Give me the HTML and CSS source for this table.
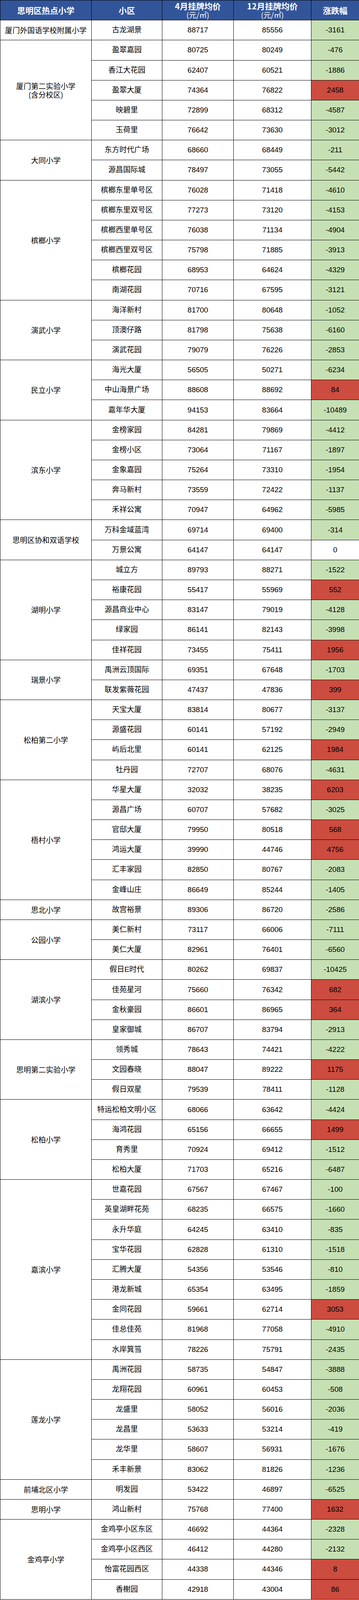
FILE: index.html
```html
<!DOCTYPE html>
<html lang="zh-CN">
<head>
<meta charset="utf-8">
<title>思明区热点小学挂牌均价</title>
<link rel="stylesheet" href="styles.css">
</head>
<body>
<table class="price-table">
  <colgroup>
    <col class="c-school">
    <col class="c-estate">
    <col class="c-apr">
    <col class="c-dec">
    <col class="c-diff">
  </colgroup>
  <thead>
    <tr>
      <th>思明区热点小学</th>
      <th>小区</th>
      <th>4月挂牌均价<br><span class="unit">(元/㎡)</span></th>
      <th>12月挂牌均价<br><span class="unit">(元/㎡)</span></th>
      <th>涨跌幅</th>
    </tr>
  </thead>
  <tbody>
    <tr><td class="school">厦门外国语学校附属小学</td><td>古龙湖景</td><td>88717</td><td>85556</td><td class="down">-3161</td></tr>

    <tr><td class="school" rowspan="5">厦门第二实验小学<br>(含分校区)</td><td>盈翠嘉园</td><td>80725</td><td>80249</td><td class="down">-476</td></tr>
    <tr><td>香江大花园</td><td>62407</td><td>60521</td><td class="down">-1886</td></tr>
    <tr><td>盈翠大厦</td><td>74364</td><td>76822</td><td class="up">2458</td></tr>
    <tr><td>映碧里</td><td>72899</td><td>68312</td><td class="down">-4587</td></tr>
    <tr><td>玉荷里</td><td>76642</td><td>73630</td><td class="down">-3012</td></tr>

    <tr><td class="school" rowspan="2">大同小学</td><td>东方时代广场</td><td>68660</td><td>68449</td><td class="down">-211</td></tr>
    <tr><td>源昌国际城</td><td>78497</td><td>73055</td><td class="down">-5442</td></tr>

    <tr><td class="school" rowspan="6">槟榔小学</td><td>槟榔东里单号区</td><td>76028</td><td>71418</td><td class="down">-4610</td></tr>
    <tr><td>槟榔东里双号区</td><td>77273</td><td>73120</td><td class="down">-4153</td></tr>
    <tr><td>槟榔西里单号区</td><td>76038</td><td>71134</td><td class="down">-4904</td></tr>
    <tr><td>槟榔西里双号区</td><td>75798</td><td>71885</td><td class="down">-3913</td></tr>
    <tr><td>槟榔花园</td><td>68953</td><td>64624</td><td class="down">-4329</td></tr>
    <tr><td>南湖花园</td><td>70716</td><td>67595</td><td class="down">-3121</td></tr>

    <tr><td class="school" rowspan="3">演武小学</td><td>海洋新村</td><td>81700</td><td>80648</td><td class="down">-1052</td></tr>
    <tr><td>顶澳仔路</td><td>81798</td><td>75638</td><td class="down">-6160</td></tr>
    <tr><td>演武花园</td><td>79079</td><td>76226</td><td class="down">-2853</td></tr>

    <tr><td class="school" rowspan="3">民立小学</td><td>海光大厦</td><td>56505</td><td>50271</td><td class="down">-6234</td></tr>
    <tr><td>中山海景广场</td><td>88608</td><td>88692</td><td class="up">84</td></tr>
    <tr><td>嘉年华大厦</td><td>94153</td><td>83664</td><td class="down">-10489</td></tr>

    <tr><td class="school" rowspan="5">滨东小学</td><td>金榜家园</td><td>84281</td><td>79869</td><td class="down">-4412</td></tr>
    <tr><td>金榜小区</td><td>73064</td><td>71167</td><td class="down">-1897</td></tr>
    <tr><td>金象嘉园</td><td>75264</td><td>73310</td><td class="down">-1954</td></tr>
    <tr><td>奔马新村</td><td>73559</td><td>72422</td><td class="down">-1137</td></tr>
    <tr><td>禾祥公寓</td><td>70947</td><td>64962</td><td class="down">-5985</td></tr>

    <tr><td class="school" rowspan="2">思明区协和双语学校</td><td>万科金域蓝湾</td><td>69714</td><td>69400</td><td class="down">-314</td></tr>
    <tr><td>万景公寓</td><td>64147</td><td>64147</td><td class="zero">0</td></tr>

    <tr><td class="school" rowspan="5">湖明小学</td><td>城立方</td><td>89793</td><td>88271</td><td class="down">-1522</td></tr>
    <tr><td>裕康花园</td><td>55417</td><td>55969</td><td class="up">552</td></tr>
    <tr><td>源昌商业中心</td><td>83147</td><td>79019</td><td class="down">-4128</td></tr>
    <tr><td>绿家园</td><td>86141</td><td>82143</td><td class="down">-3998</td></tr>
    <tr><td>佳祥花园</td><td>73455</td><td>75411</td><td class="up">1956</td></tr>

    <tr><td class="school" rowspan="2">瑞景小学</td><td>禹洲云顶国际</td><td>69351</td><td>67648</td><td class="down">-1703</td></tr>
    <tr><td>联发紫薇花园</td><td>47437</td><td>47836</td><td class="up">399</td></tr>

    <tr><td class="school" rowspan="4">松柏第二小学</td><td>天宝大厦</td><td>83814</td><td>80677</td><td class="down">-3137</td></tr>
    <tr><td>源盛花园</td><td>60141</td><td>57192</td><td class="down">-2949</td></tr>
    <tr><td>屿后北里</td><td>60141</td><td>62125</td><td class="up">1984</td></tr>
    <tr><td>牡丹园</td><td>72707</td><td>68076</td><td class="down">-4631</td></tr>

    <tr><td class="school" rowspan="6">梧村小学</td><td>华星大厦</td><td>32032</td><td>38235</td><td class="up">6203</td></tr>
    <tr><td>源昌广场</td><td>60707</td><td>57682</td><td class="down">-3025</td></tr>
    <tr><td>官邸大厦</td><td>79950</td><td>80518</td><td class="up">568</td></tr>
    <tr><td>鸿运大厦</td><td>39990</td><td>44746</td><td class="up">4756</td></tr>
    <tr><td>汇丰家园</td><td>82850</td><td>80767</td><td class="down">-2083</td></tr>
    <tr><td>金峰山庄</td><td>86649</td><td>85244</td><td class="down">-1405</td></tr>

    <tr><td class="school">思北小学</td><td>故宫裕景</td><td>89306</td><td>86720</td><td class="down">-2586</td></tr>

    <tr><td class="school" rowspan="2">公园小学</td><td>美仁新村</td><td>73117</td><td>66006</td><td class="down">-7111</td></tr>
    <tr><td>美仁大厦</td><td>82961</td><td>76401</td><td class="down">-6560</td></tr>

    <tr><td class="school" rowspan="4">湖滨小学</td><td>假日E时代</td><td>80262</td><td>69837</td><td class="down">-10425</td></tr>
    <tr><td>佳苑星河</td><td>75660</td><td>76342</td><td class="up">682</td></tr>
    <tr><td>金秋豪园</td><td>86601</td><td>86965</td><td class="up">364</td></tr>
    <tr><td>皇家御城</td><td>86707</td><td>83794</td><td class="down">-2913</td></tr>

    <tr><td class="school" rowspan="3">思明第二实验小学</td><td>领秀城</td><td>78643</td><td>74421</td><td class="down">-4222</td></tr>
    <tr><td>文园春晓</td><td>88047</td><td>89222</td><td class="up">1175</td></tr>
    <tr><td>假日双星</td><td>79539</td><td>78411</td><td class="down">-1128</td></tr>

    <tr><td class="school" rowspan="4">松柏小学</td><td>特运松柏文明小区</td><td>68066</td><td>63642</td><td class="down">-4424</td></tr>
    <tr><td>海鸿花园</td><td>65156</td><td>66655</td><td class="up">1499</td></tr>
    <tr><td>育秀里</td><td>70924</td><td>69412</td><td class="down">-1512</td></tr>
    <tr><td>松柏大厦</td><td>71703</td><td>65216</td><td class="down">-6487</td></tr>

    <tr><td class="school" rowspan="9">嘉滨小学</td><td>世嘉花园</td><td>67567</td><td>67467</td><td class="down">-100</td></tr>
    <tr><td>英皇湖畔花苑</td><td>68235</td><td>66575</td><td class="down">-1660</td></tr>
    <tr><td>永升华庭</td><td>64245</td><td>63410</td><td class="down">-835</td></tr>
    <tr><td>宝华花园</td><td>62828</td><td>61310</td><td class="down">-1518</td></tr>
    <tr><td>汇腾大厦</td><td>54356</td><td>53546</td><td class="down">-810</td></tr>
    <tr><td>港龙新城</td><td>65354</td><td>63495</td><td class="down">-1859</td></tr>
    <tr><td>金同花园</td><td>59661</td><td>62714</td><td class="up">3053</td></tr>
    <tr><td>佳总佳苑</td><td>81968</td><td>77058</td><td class="down">-4910</td></tr>
    <tr><td>水岸箕筜</td><td>78226</td><td>75791</td><td class="down">-2435</td></tr>

    <tr><td class="school" rowspan="6">莲龙小学</td><td>禹洲花园</td><td>58735</td><td>54847</td><td class="down">-3888</td></tr>
    <tr><td>龙翔花园</td><td>60961</td><td>60453</td><td class="down">-508</td></tr>
    <tr><td>龙盛里</td><td>58052</td><td>56016</td><td class="down">-2036</td></tr>
    <tr><td>龙昌里</td><td>53633</td><td>53214</td><td class="down">-419</td></tr>
    <tr><td>龙华里</td><td>58607</td><td>56931</td><td class="down">-1676</td></tr>
    <tr><td>禾丰新景</td><td>83062</td><td>81826</td><td class="down">-1236</td></tr>

    <tr><td class="school">前埔北区小学</td><td>明发园</td><td>53422</td><td>46897</td><td class="down">-6525</td></tr>

    <tr><td class="school">思明小学</td><td>鸿山新村</td><td>75768</td><td>77400</td><td class="up">1632</td></tr>

    <tr><td class="school" rowspan="4">金鸡亭小学</td><td>金鸡亭小区东区</td><td>46692</td><td>44364</td><td class="down">-2328</td></tr>
    <tr><td>金鸡亭小区西区</td><td>46412</td><td>44280</td><td class="down">-2132</td></tr>
    <tr><td>怡富花园西区</td><td>44338</td><td>44346</td><td class="up">8</td></tr>
    <tr><td>香榭园</td><td>42918</td><td>43004</td><td class="up">86</td></tr>
  </tbody>
</table>
</body>
</html>
```

FILE: styles.css
```css
:root {
  --row-h: calc(100vh * 73 / 5842);
  --line-h: min(28px, max(22px, calc(100vh * 28 / 5842)));
  --head-line-h: min(27px, max(22px, calc(100vh * 27 / 5842)));
}

html, body {
  margin: 0;
  padding: 0;
  background: #ffffff;
}

.price-table {
  width: 920px;
  table-layout: fixed;
  border-collapse: collapse;
  font-family: "Liberation Sans", "Noto Sans CJK SC", sans-serif;
  font-size: 19px;
  color: #000000;
}

.c-school { width: 234px; }
.c-estate { width: 181px; }
.c-apr { width: 183px; }
.c-dec { width: 199px; }
.c-diff { width: 123px; }

.price-table tr {
  height: var(--row-h);
}

.price-table th,
.price-table td {
  border: 1px solid #000000;
  padding: 0 2px;
  text-align: center;
  vertical-align: middle;
  white-space: nowrap;
  line-height: var(--line-h);
}

.price-table th {
  background: #32559a;
  color: #ffffff;
  font-family: "Noto Sans CJK SC", sans-serif;
  font-weight: 700;
  font-size: 21px;
  line-height: var(--head-line-h);
}

.price-table th .unit {
  font-weight: 400;
  font-size: 19px;
}

.price-table td.school {
  font-family: "Noto Sans CJK SC", sans-serif;
}

.price-table td.down {
  background: #c6e0b4;
}

.price-table td.up {
  background: #cc4c3f;
}

.price-table td.zero {
  background: #ffffff;
}
```
